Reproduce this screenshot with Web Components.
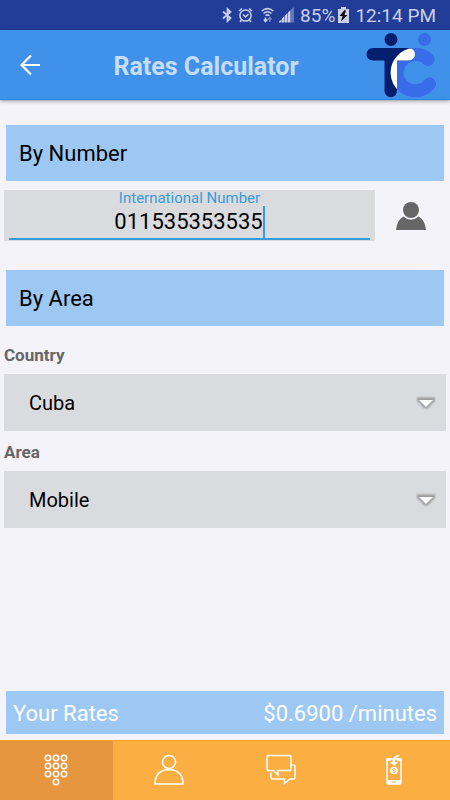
<!DOCTYPE html>
<html lang="en">
<head>
<meta charset="utf-8">
<meta name="viewport" content="width=device-width, initial-scale=1">
<title>Rates Calculator</title>
<style>
  html, body { margin: 0; min-height: 100%; }
  body { font-family: Roboto, "Liberation Sans", sans-serif; background: #f4f3f9; color: #000; }
</style>
</head>
<body>
<rates-app></rates-app>
<script>
class BaseElement extends HTMLElement {
  connectedCallback() {
    if (this.shadowRoot) return;
    this.attachShadow({ mode: 'open' }).innerHTML =
      '<style>*{box-sizing:border-box}:host{box-sizing:border-box}</style>' + this.view();
  }
}

class StatusBar extends BaseElement {
  view() {
    return `<style>
      :host { display: flex; justify-content: flex-end; align-items: center; height: 30px; padding: 0 14px 0 0;
        background: #213d98; color: #c9d0ec; font-size: 19px; }
      svg { display: block; flex: none; }
      .bt { margin-right: 5px; } .alarm { margin-right: 8px; } .wifi { margin-right: 5px; }
      .signal { margin-right: 6px; } .bat { margin: 0 6px 0 3px; }
    </style>
    <svg class="bt" width="11" height="16" viewBox="0 0 11 16" fill="none" stroke="currentColor" stroke-width="1.800"><path d="M1 4.500l7.500 6.500L5.500 14V2l3 3L1 11.500"/></svg>
    <svg class="alarm" width="15" height="16" viewBox="0 0 15 16" fill="none" stroke="currentColor" stroke-width="1.500"><circle cx="7.500" cy="8.500" r="5.600"/><path d="M1 4l3-2.500M14 4l-3-2.500M3.500 13l-1.500 2M11.500 13l1.500 2M5 7.500l2.500 2.500 3-3"/></svg>
    <svg class="wifi" width="13" height="16" viewBox="0 0 13 16" fill="none" stroke="currentColor" stroke-width="1.500"><path d="M.7 4Q6.500-.8 12.300 4M2.500 6.500Q6.500 3 10.500 6.500M4.500 8.700Q6.500 7 8.500 8.700"/><path d="M4.500 10.500v4M2.800 12.500l1.700 2 1.700-2"/><path opacity=".5" d="M8.700 15v-4M7 12.500l1.700-2 1.700 2"/></svg>
    <svg class="signal" width="15" height="16" viewBox="0 0 15 16" fill="currentColor"><path d="M0 15.500v-1l2.500-2v3zM3 15.500v-4L5.500 9v6.500zM6 15.500v-7L8.500 6v9.500zM9 15.500v-10L11.500 3v12.500z"/><path opacity=".4" d="M12 15.500v-13L15 0v15.500z"/></svg>
    <span>85%</span>
    <svg class="bat" width="11" height="16" viewBox="0 0 11 16"><path fill="#c9d0ec" d="M3 0h5v2h3v14H0V2h3z"/><path fill="#101010" d="M6.500 3L1.500 9h3L3 14.500 9.500 8h-3L8 3.500z"/></svg>
    <span>12:14 PM</span>`;
  }
}

class TcLogo extends BaseElement {
  view() {
    return `<style>:host { display: block; } svg { display: block; }</style>
    <svg width="72" height="68" viewBox="366 31 72 68" role="img" aria-label="TC">
      <defs><clipPath id="t"><rect x="366.500" y="48" width="48.500" height="12.500" rx="6.200"/><path d="M384.500 50H397V91a6.200 6.200 0 0 1-12.500 0z"/></clipPath></defs>
      <circle cx="424.500" cy="39.500" r="6.500" fill="#386ce9"/>
      <path d="M428 59.500A18.200 18.200 0 1 0 429.500 84" fill="none" stroke="#386ce9" stroke-width="13" stroke-linecap="round"/>
      <g fill="#051f6e"><circle cx="391" cy="39.500" r="6.500"/><path clip-path="url(#t)" d="M366 46h52v54h-52z"/></g>
      <g clip-path="url(#t)"><path d="M428 59.500A18.200 18.200 0 1 0 429.500 84" fill="none" stroke="#fff" stroke-width="13"/></g>
    </svg>`;
  }
}

class AppHeader extends BaseElement {
  view() {
    return `<style>
      :host { display: grid; grid-template-columns: 34px 1fr 72px; align-items: center; height: 70px; padding: 0 12px 0 12px;
        background: #4091ea; border-bottom: 1px solid #1b86e6; box-shadow: 0 1px 4px rgba(0,0,0,.4); position: relative; }
      button { width: 36px; height: 48px; padding: 0; border: 0; background: none; display: grid; place-items: center; }
      h1 { margin: 0; padding-top: 4px; text-align: center; font-size: 25px; font-weight: 700; color: #c5ddf8; white-space: nowrap; }
    </style>
    <button type="button" aria-label="Back"><svg width="22" height="22" viewBox="0 0 22 22" fill="none" stroke="#fff" stroke-width="2.200"><path d="M21 11H3M12 1.500L2.500 11 12 20.500"/></svg></button>
    <h1><slot></slot></h1><tc-logo></tc-logo>`;
  }
}

class SectionBar extends BaseElement {
  view() {
    return `<style>
      :host { display: block; margin: 0 6px; background: #9dc8f4; }
      h2 { margin: 0; padding: 2px 13px 0; font-size: 22px; line-height: 54px; font-weight: 400; }
    </style><h2><slot></slot></h2>`;
  }
}

class NumberField extends BaseElement {
  view() {
    return `<style>
      :host { display: flex; margin: 9px 4px 29px; }
      .box { flex: 1; min-width: 0; background: #dadbdf; padding: 0 5px 3px; height: 51px; display: flex; flex-direction: column; }
      label { font-size: 15px; line-height: 16px; text-align: center; color: #3c9bd9; }
      .line { flex: 1; display: flex; justify-content: center; border-bottom: 2px solid #359cdb; }
      input { field-sizing: content; border: 0; padding: 0; margin: 0; background: none; outline: 0;
        font: 22px/32px Roboto, "Liberation Sans", sans-serif; color: #000; height: 32px; }
      i { width: 2px; background: #359cdb; }
      button { width: 71px; padding: 0; border: 0; background: none; display: grid; place-items: center; }
    </style>
    <div class="box"><label for="n">International Number</label>
      <div class="line"><input id="n" type="tel" value="011535353535"><i></i></div></div>
    <button type="button" aria-label="Contacts"><svg width="30" height="28" viewBox="0 0 30 28" fill="#666"><circle cx="15" cy="8" r="8"/><path d="M0 28Q1 18 7.500 14.500Q11 17.700 15 17.700T22.500 14.500Q29 18 30 28z"/></svg></button>`;
  }
}

class SelectField extends BaseElement {
  view() {
    return `<style>
      :host { display: block; margin: 0 4px; }
      label { display: block; font-size: 17px; line-height: 20px; font-weight: 700; color: #666; margin-bottom: 9px; }
      .box { display: grid; grid-template-columns: 1fr 30px; align-items: center; background: #dadbdf; }
      select { grid-area: 1 / 1 / 2 / 3; width: 100%; height: 57px; appearance: none; border: 0; border-radius: 0; background: none;
        padding: 0 40px 0 25px; font: 20px Roboto, "Liberation Sans", sans-serif; color: #000; }
      svg { grid-area: 1 / 2; pointer-events: none; }
    </style>
    <label for="s">${this.getAttribute('label')}</label>
    <div class="box"><select id="s"><option>${this.getAttribute('value')}</option></select>
      <svg width="20" height="14" viewBox="0 0 20 14"><defs><filter id="b"><feGaussianBlur stdDeviation=".8"/></filter></defs><path filter="url(#b)" fill="#999" d="M1 1.500h18v3L11.500 12.500h-3L1 4.500z"/><path fill="#fff" d="M3 4h14L10 11z"/></svg></div>`;
  }
}

class RateSummary extends BaseElement {
  view() {
    return `<style>
      :host { display: flex; justify-content: space-between; margin: 0 6px 6px; padding: 2px 7px 0; background: #9dc8f4; color: #fff;
        font-size: 22px; line-height: 41px; }
    </style><slot name="label"></slot><slot name="rate"></slot>`;
  }
}

class TabBar extends BaseElement {
  view() {
    const dots = [0, 1, 2].flatMap(r => [0, 1, 2].map(c => [c, r])).concat([[1, 3]])
      .map(([c, r]) => `<circle cx="${4 + c * 8}" cy="${4 + r * 8}" r="2.700"/>`).join('');
    return `<style>
      :host { display: block; }
      nav { display: grid; grid-template-columns: repeat(4, 1fr); height: 60px; background: #fbaf43; border-top: 1px solid #f7a01c; }
      button { border: 0; padding: 0 0 2px; background: none; display: grid; place-items: center; color: #fff; }
      button[aria-current] { background: #e6963f; }
      svg { fill: none; stroke: currentColor; stroke-width: 1.5; }
    </style><nav>
      <button type="button" aria-label="Dial" aria-current="page"><svg width="24" height="32" viewBox="0 0 24 32">${dots}</svg></button>
      <button type="button" aria-label="Contacts"><svg width="30" height="32" viewBox="0 0 30 32"><circle cx="15" cy="8" r="6.500"/><path d="M1 30Q1 16 15 15.500Q29 16 29 30z"/></svg></button>
      <button type="button" aria-label="Messages"><svg width="30" height="32" viewBox="0 0 30 32"><path d="M2.500 1.500h21q1.500 0 1.500 1.500v12q0 1.500-1.500 1.500H12V21l-4.500-4.500h-5Q1 16.500 1 15V3Q1 1.500 2.500 1.500z"/><path d="M26.500 11h1q1.500 0 1.500 1.500v11q0 1.500-1.500 1.500H24l-5.500 4.500V25h-12Q5 25 5 23.500V18.500"/></svg></button>
      <button type="button" aria-label="Top up"><svg width="18" height="32" viewBox="0 0 18 32"><rect x="2" y="5" width="14" height="25" rx="2"/><path fill="currentColor" stroke="none" d="M1 5q0-1 2-1h3v3H1zM12 4h3q2 0 2 2v1h-5zM2 26h14v4H2zM14.500 1Q7.500 1 7.500 8H5L9 12 13 8h-3Q10 3 14.500 2z"/><circle cx="9" cy="16.500" r="3.800" fill="currentColor" stroke="none"/><path stroke="#fbaf43" stroke-width="1" d="M10.300 15Q7.500 14 7.700 15.500T10.300 17.500Q10 19 7.500 18M7 28h4"/></svg></button>
    </nav>`;
  }
}

class RatesApp extends BaseElement {
  view() {
    return `<style>
      :host { display: flex; flex-direction: column; min-height: 100vh; }
      main { flex: 1; display: flex; flex-direction: column; padding-top: 25px; }
      .selects { display: grid; gap: 11px; margin: 19px 0 24px; }
      rate-summary { margin-top: auto; }
    </style>
    <status-bar></status-bar>
    <app-header>Rates Calculator</app-header>
    <main>
      <section-bar>By Number</section-bar>
      <number-field></number-field>
      <section-bar>By Area</section-bar>
      <div class="selects">
        <select-field label="Country" value="Cuba"></select-field>
        <select-field label="Area" value="Mobile"></select-field>
      </div>
      <rate-summary><span slot="label">Your Rates</span><span slot="rate">$0.6900 /minutes</span></rate-summary>
    </main>
    <tab-bar></tab-bar>`;
  }
}

customElements.define('status-bar', StatusBar);
customElements.define('tc-logo', TcLogo);
customElements.define('app-header', AppHeader);
customElements.define('section-bar', SectionBar);
customElements.define('number-field', NumberField);
customElements.define('select-field', SelectField);
customElements.define('rate-summary', RateSummary);
customElements.define('tab-bar', TabBar);
customElements.define('rates-app', RatesApp);
</script>
</body>
</html>
